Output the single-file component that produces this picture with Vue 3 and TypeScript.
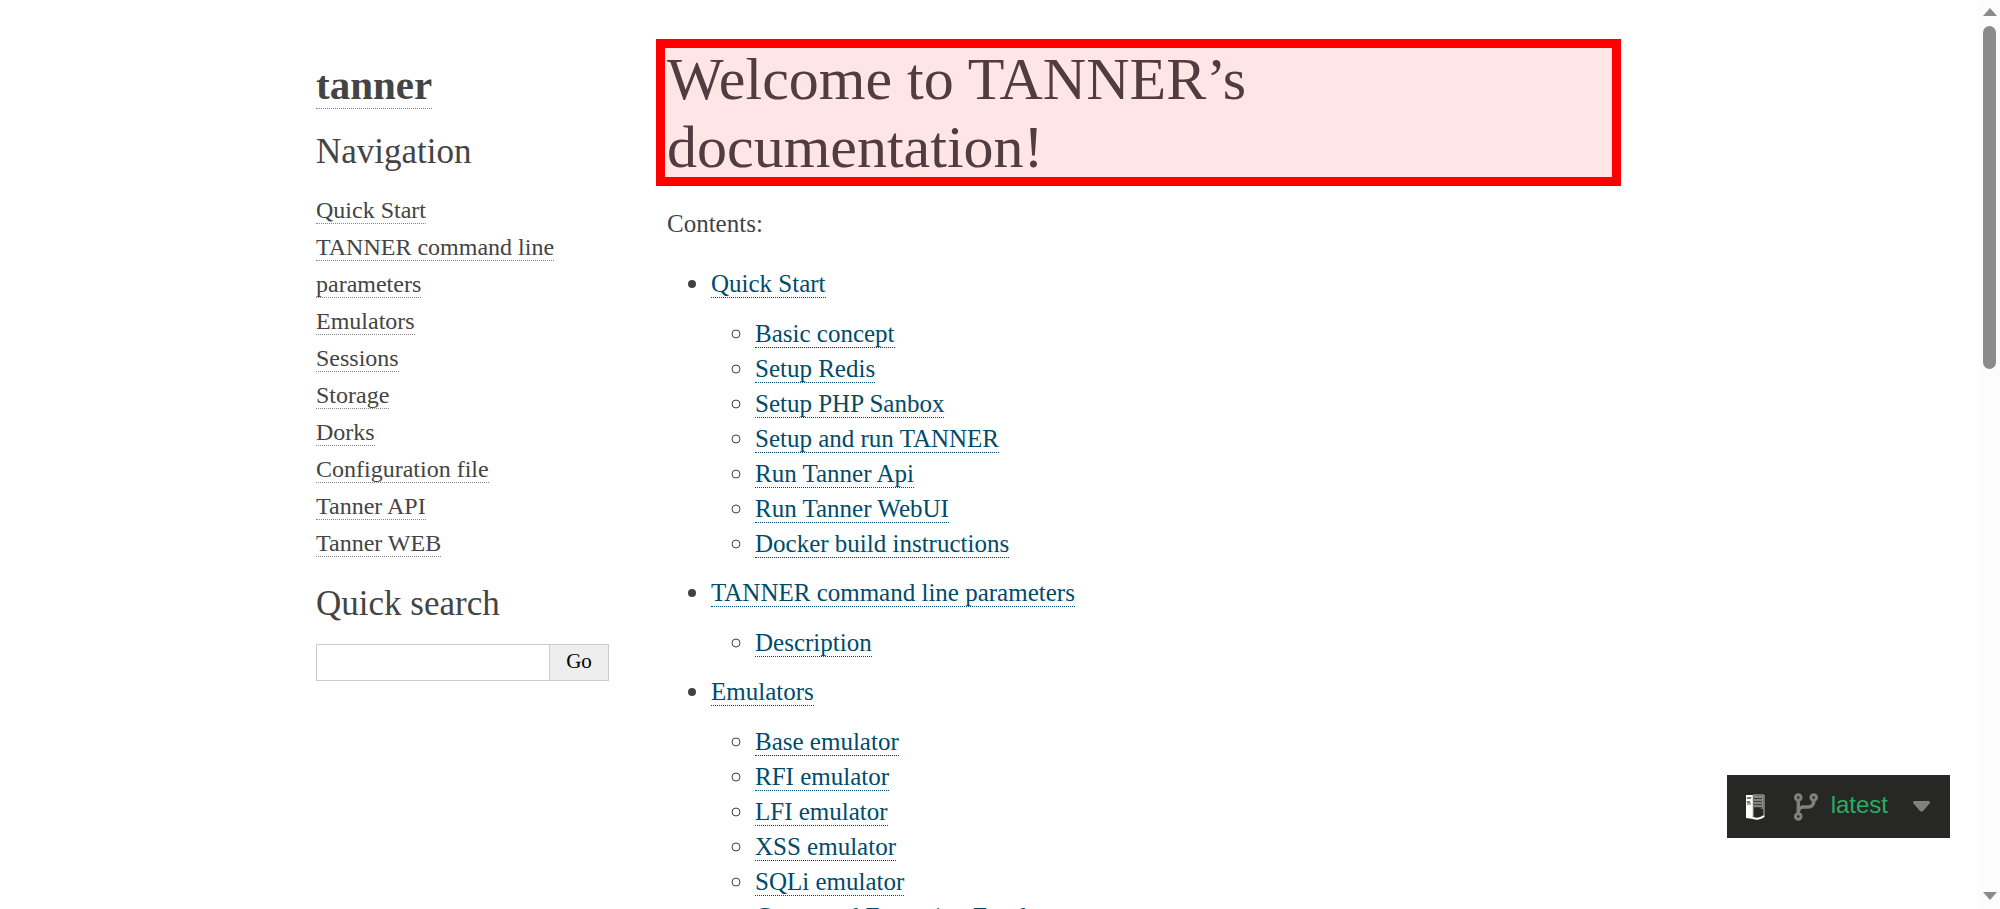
<script setup lang="ts">
interface Section {
  title: string
  children: string[]
}

const navigation: string[] = [
  'Quick Start',
  'TANNER command line parameters',
  'Emulators',
  'Sessions',
  'Storage',
  'Dorks',
  'Configuration file',
  'Tanner API',
  'Tanner WEB',
]

const sections: Section[] = [
  {
    title: 'Quick Start',
    children: [
      'Basic concept',
      'Setup Redis',
      'Setup PHP Sanbox',
      'Setup and run TANNER',
      'Run Tanner Api',
      'Run Tanner WebUI',
      'Docker build instructions',
    ],
  },
  { title: 'TANNER command line parameters', children: ['Description'] },
  {
    title: 'Emulators',
    children: [
      'Base emulator',
      'RFI emulator',
      'LFI emulator',
      'XSS emulator',
      'SQLi emulator',
      'Command Execution Emulator',
    ],
  },
]
</script>

<template>
  <div class="viewport">
    <div class="page">
      <div class="document">
        <aside class="sidebar">
          <h1 class="logo"><a href="#">tanner</a></h1>
          <h3>Navigation</h3>
          <nav>
            <ul class="nav-list">
              <li v-for="item in navigation" :key="item"><a href="#">{{ item }}</a></li>
            </ul>
          </nav>
          <h3 id="search-label">Quick search</h3>
          <form class="search" @submit.prevent>
            <input type="text" name="q" aria-labelledby="search-label" />
            <button type="submit">Go</button>
          </form>
        </aside>
        <main class="body">
          <h1 class="title">Welcome to TANNER’s documentation!</h1>
          <p>Contents:</p>
          <ul class="toc">
            <li v-for="section in sections" :key="section.title">
              <a href="#">{{ section.title }}</a>
              <ul>
                <li v-for="child in section.children" :key="child"><a href="#">{{ child }}</a></li>
              </ul>
            </li>
          </ul>
        </main>
      </div>
    </div>
    <div class="scrollbar" aria-hidden="true">
      <svg width="14" height="8" viewBox="0 0 14 8"><path d="M7 0 14 8H0z" fill="#8b8b8b" /></svg>
      <div class="track"><div class="thumb"></div></div>
      <svg width="14" height="8" viewBox="0 0 14 8"><path d="M0 0h14L7 8z" fill="#8b8b8b" /></svg>
    </div>
    <button class="flyout" type="button">
      <svg class="book" width="20" height="26" viewBox="0 0 20 26">
        <path d="M1 1h7v24l-7-1z" fill="#fff" />
        <path d="M8 1h11v22l-6 2-5-1z" fill="#272725" stroke="#bdbdbd" stroke-width="1" />
        <path d="M9 2h9v13q-5-2-9-1z" fill="#8f8f8f" />
        <path d="M8 24q6 2 11-2" fill="none" stroke="#fff" stroke-width="2" />
        <path d="M2 3l1 2 1-2 1 2 1-2M2 7l1 2 1-2 1 2M2 10h4" fill="none" stroke="#555" stroke-width="1" />
        <path d="M9 4l2 1 2-1 2 1 2-1M9 7l2 1 2-1 2 1 2-1M9 10l2 1 2-1 2 1 2-1M9 13l2 1 2-1 2 1 2-1" fill="none" stroke="#272725" stroke-width="1" />
      </svg>
      <svg class="branch" width="24" height="28" viewBox="0 0 448 512">
        <path fill="#808080" d="M80 104a24 24 0 1 0 0-48 24 24 0 1 0 0 48zm80-24c0 32.800-19.700 61-48 73.300v87.800c18.800-10.900 40.700-17.100 64-17.100h96c35.300 0 64-28.700 64-64v-6.700C307.700 141 288 112.800 288 80c0-44.200 35.800-80 80-80s80 35.800 80 80c0 32.800-19.700 61-48 73.300V160c0 70.700-57.300 128-128 128H176c-35.300 0-64 28.700-64 64v6.700c28.300 12.300 48 40.500 48 73.300 0 44.200-35.800 80-80 80S0 476.200 0 432c0-32.800 19.700-61 48-73.300V153.300C19.700 141 0 112.800 0 80 0 35.800 35.800 0 80 0s80 35.800 80 80zm232 0a24 24 0 1 0-48 0 24 24 0 1 0 48 0zM80 456a24 24 0 1 0 0-48 24 24 0 1 0 0 48z" />
      </svg>
      <span class="version">latest</span>
      <svg class="caret" width="17" height="11" viewBox="0 0 17 11"><path d="M1 0h15q1 0 1 2L10 10q-1 1-3 0L0 2q0-2 1-2z" fill="#808080" /></svg>
    </button>
  </div>
</template>

<style>
body {
  margin: 0;
  background: #fff;
}
</style>

<style scoped>
.viewport {
  display: flex;
  height: 100vh;
  overflow: hidden;
  font-family: "Liberation Serif", "Times New Roman", serif;
  font-size: 25px;
  line-height: 35px;
  color: #3e4349;
}

.page {
  flex: 1;
  min-width: 0;
}

.document {
  display: flex;
  max-width: 1379px;
  margin: 0 auto;
}

.sidebar {
  flex: none;
  box-sizing: border-box;
  width: 323px;
  padding: 61px 14px 0 16px;
  font-size: 24px;
  line-height: 37px;
  color: #444;
}

.sidebar a {
  color: #444;
  text-decoration: none;
  border-bottom: 1px dotted #888;
}

.logo {
  margin: 0 0 19px;
  font-size: 41px;
  line-height: 48px;
}

h3 {
  margin: 0;
  font-size: 35px;
  font-weight: 400;
  line-height: 48px;
}

ul {
  margin: 0;
  padding: 0;
}

.nav-list {
  margin: 16px 0 18px;
  list-style: none;
}

.search {
  display: flex;
  margin-top: 16px;
}

.search input,
.search button {
  box-sizing: border-box;
  height: 37px;
  margin: 0;
  border: 1px solid #ccc;
  border-radius: 0;
  font-family: inherit;
  font-size: 21px;
}

.search input {
  flex: 1;
  min-width: 0;
  background: #fff;
}

.search button {
  width: 60px;
  margin-left: -1px;
  padding: 0 0 3px;
  background: #eee;
  color: #000;
}

.body {
  flex: 1;
  min-width: 0;
  padding: 45px 69px 0 44px;
}

.title {
  position: relative;
  margin: 0 0 25px;
  font-size: 60px;
  font-weight: 400;
  line-height: 68px;
}

.title::after {
  content: "";
  position: absolute;
  inset: -6px -11px -5px;
  border: 9px solid #f00;
  background: rgb(255 0 0 / 10%);
  background-clip: padding-box;
}

p {
  margin: 0 0 24px;
}

.toc {
  padding-left: 44px;
  font-size: 28px;
}

.toc ul {
  margin: 15px 0 14px;
  padding-left: 44px;
}

.toc a {
  color: #004b6b;
  font-size: 25px;
  line-height: 25px;
  text-decoration: none;
  border-bottom: 1px dotted #004b6b;
}

.scrollbar {
  display: flex;
  flex: none;
  flex-direction: column;
  align-items: center;
  box-sizing: border-box;
  width: 21px;
  padding: 8px 0 9px;
  background: #fcfcfc;
}

.track {
  flex: 1;
  padding-top: 10px;
}

.thumb {
  width: 13px;
  height: 343px;
  border-radius: 7px;
  background: #8b8b8b;
}

.flyout {
  position: fixed;
  right: 50px;
  bottom: 71px;
  display: flex;
  align-items: center;
  height: 63px;
  padding: 0 20px 0 18px;
  border: 0;
  background: #272725;
  color: #27ae60;
  font-family: "Liberation Sans", Arial, sans-serif;
  font-size: 24px;
}

.branch {
  margin: 0 13px 0 29px;
}

.version {
  padding-bottom: 3px;
}

.caret {
  margin-left: 25px;
}
</style>
